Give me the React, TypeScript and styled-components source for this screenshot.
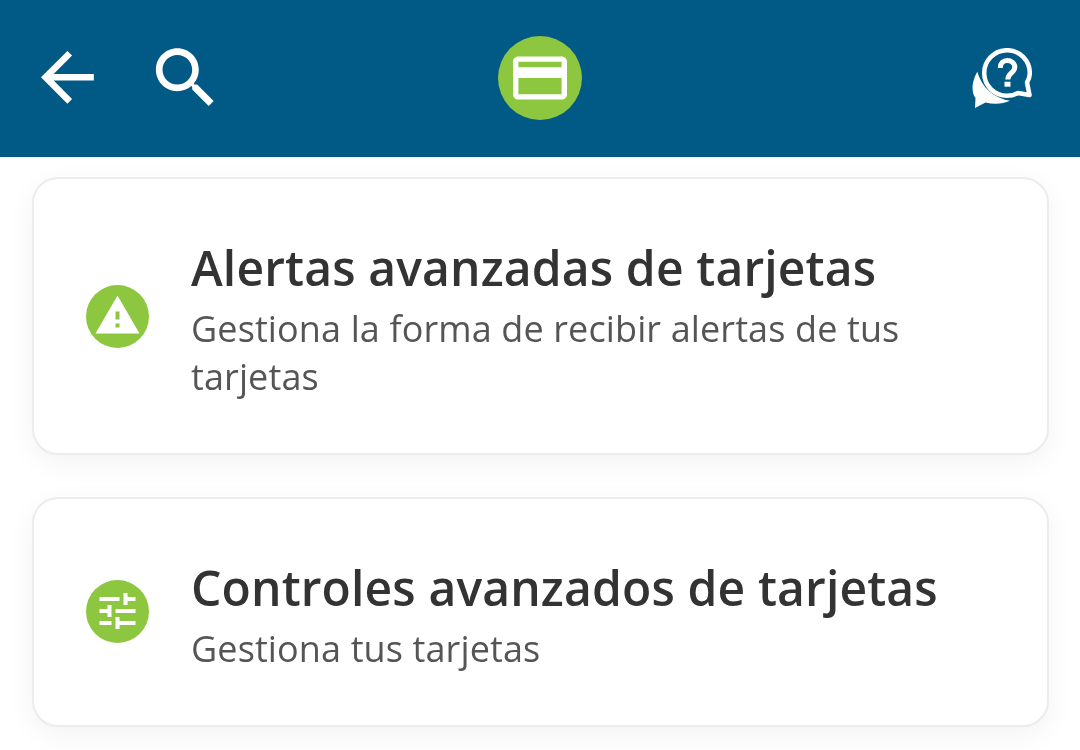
import React from "react";
import styled, { createGlobalStyle } from "styled-components";

const GlobalStyle = createGlobalStyle`
  html, body {
    margin: 0;
    padding: 0;
    height: 100%;
    overflow: hidden;
    background: #fff;
    font-family: "Open Sans", "Noto Sans", sans-serif;
    -webkit-font-smoothing: antialiased;
  }
`;

const Page = styled.div`
  width: 1080px;
  height: 750px;
  overflow: hidden;
  background: #fff;
`;

const Header = styled.header`
  height: 156px;
  padding: 0 40px 1px;
  display: grid;
  grid-template-columns: 1fr auto 1fr;
  align-items: center;
  background: #005a85;
`;

const LeftIcons = styled.div`
  display: flex;
  align-items: center;
  gap: 59px;
`;

const RightIcons = styled.div`
  display: flex;
  justify-content: flex-end;
  padding-right: 8px;
`;

const IconButton = styled.button`
  display: block;
  padding: 0;
  border: 0;
  background: none;
  line-height: 0;
`;

const List = styled.main`
  display: flex;
  flex-direction: column;
  gap: 42px;
  padding: 20px 31px 0 32px;
`;

const Card = styled.section`
  display: flex;
  align-items: center;
  gap: 42px;
  padding: 53px 40px 52px 52px;
  border: 2px solid #ececec;
  border-radius: 26px;
  background: #fff;
  box-shadow: 0 8px 28px rgba(0, 0, 0, 0.05);
`;

const Badge = styled.div<{ $raised?: boolean }>`
  flex: none;
  width: 63px;
  height: 63px;
  margin-top: ${(props) => (props.$raised ? "-2px" : "0")};
  line-height: 0;
`;

const Text = styled.div`
  flex: 1;
  will-change: transform;
`;

const Title = styled.h2`
  margin: 0;
  font-size: 48px;
  line-height: 72px;
  font-weight: 600;
  letter-spacing: 0.14px;
  color: #333;
`;

const Subtitle = styled.p`
  margin: 1px 0 0;
  font-size: 36px;
  line-height: 48px;
  font-weight: 400;
  letter-spacing: 0.12px;
  color: #555;
`;

const BackIcon = () => (
  <svg width="56" height="56" viewBox="0 0 56 56" fill="#fff">
    <path
      transform="translate(-12.2 -12.3) scale(3.3)"
      d="M20 11H7.83l5.59-5.59L12 4l-8 8 8 8 1.41-1.41L7.83 13H20v-2z"
    />
  </svg>
);

const SearchIcon = () => (
  <svg width="60" height="60" viewBox="0 0 60 60" fill="#fff">
    <path
      transform="translate(-9 -9.6) scale(3.3)"
      d="M15.5 14h-.79l-.28-.27C15.41 12.59 16 11.11 16 9.5 16 5.91 13.09 3 9.5 3S3 5.91 3 9.5 5.91 16 9.5 16c1.61 0 3.09-.59 4.23-1.57l.27.28v.79l5 4.99L20.49 19l-4.99-5zm-6 0C7.01 14 5 11.99 5 9.5S7.01 5 9.5 5 14 7.01 14 9.5 11.99 14 9.5 14z"
    />
  </svg>
);

const CardIcon = () => (
  <svg width="84" height="84" viewBox="0 0 84 84">
    <circle cx="42" cy="42" r="42" fill="#8dc63f" />
    <path
      fill="#fff"
      transform="translate(9.6 9.6) scale(2.7)"
      d="M20 4H4c-1.11 0-1.99.89-1.99 2L2 18c0 1.11.89 2 2 2h16c1.11 0 2-.89 2-2V6c0-1.11-.89-2-2-2zm0 14H4v-6h16v6zm0-10H4V6h16v2z"
    />
  </svg>
);

const HelpIcon = () => (
  <svg width="60" height="60" viewBox="0 0 60 60" fill="none">
    <path
      d="M35 2.200C22.400 2.200 12.200 12.400 12.200 25S22.400 47.800 35 47.800c4 0 7.800-1 11-2.800l11.500 2-2.500-12.500c1.800-3 2.800-6.100 2.800-9.500C57.800 12.400 47.600 2.200 35 2.200Z"
      stroke="#fff"
      strokeWidth="4.500"
      strokeLinejoin="round"
    />
    <path
      d="M5.300 23.700C1.500 30 0 38 .7 42c.3 4 1.300 6 2.800 8L3 60l10.500-5.500c8.500 2 17.500 1.500 24.500-1.800C22 50 10 40 5.300 23.700Z"
      fill="#fff"
    />
    <path
      d="M28.300 20c0-5 3-7.500 7-7.500s7.500 2.800 7.500 6.500c0 6-7 6-7 12.500"
      stroke="#fff"
      strokeWidth="5"
    />
    <rect x="32.500" y="33.700" width="6" height="5" fill="#fff" />
  </svg>
);

const AlertIcon = () => (
  <svg width="63" height="63" viewBox="0 0 63 63">
    <circle cx="31.500" cy="31.500" r="31.500" fill="#8dc63f" />
    <path
      fill="#fff"
      transform="translate(7.5 6.5) scale(2)"
      d="M1 21h22L12 2 1 21zm12-3h-2v-2h2v2zm0-4h-2v-4h2v4z"
    />
  </svg>
);

const SlidersIcon = () => (
  <svg width="63" height="63" viewBox="0 0 63 63">
    <circle cx="31.500" cy="31.500" r="31.500" fill="#8dc63f" />
    <path
      fill="#fff"
      transform="translate(7.5 7) scale(2)"
      d="M3 17v2h6v-2H3zM3 5v2h10V5H3zm10 16v-2h8v-2h-8v-2h-2v6h2zM7 9v2H3v2h4v2h2V9H7zm14 4v-2H11v2h10zm-6-4h2V7h4V5h-4V3h-2v6z"
    />
  </svg>
);

const items = [
  {
    title: "Alertas avanzadas de tarjetas",
    text: "Gestiona la forma de recibir alertas de tus tarjetas",
    icon: <AlertIcon />,
    raised: false,
  },
  {
    title: "Controles avanzados de tarjetas",
    text: "Gestiona tus tarjetas",
    icon: <SlidersIcon />,
    raised: true,
  },
];

export default function App(): React.ReactNode {
  return (
    <Page>
      <GlobalStyle />
      <Header>
        <LeftIcons>
          <IconButton>
            <BackIcon />
          </IconButton>
          <IconButton>
            <SearchIcon />
          </IconButton>
        </LeftIcons>
        <CardIcon />
        <RightIcons>
          <IconButton>
            <HelpIcon />
          </IconButton>
        </RightIcons>
      </Header>
      <List>
        {items.map((el) => (
          <Card key={el.title}>
            <Badge $raised={el.raised}>{el.icon}</Badge>
            <Text>
              <Title>{el.title}</Title>
              <Subtitle>{el.text}</Subtitle>
            </Text>
          </Card>
        ))}
      </List>
    </Page>
  );
}
